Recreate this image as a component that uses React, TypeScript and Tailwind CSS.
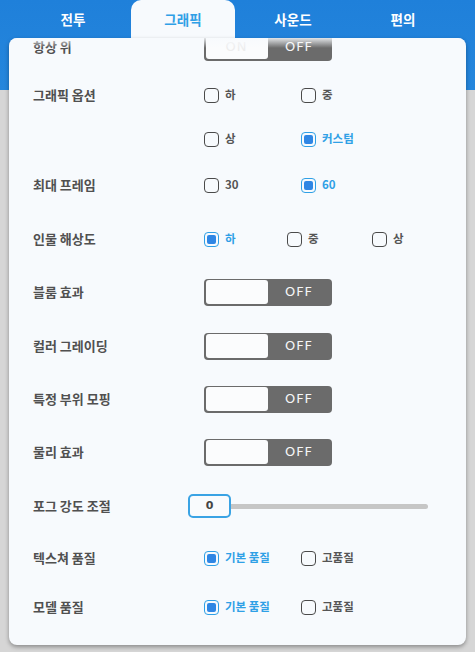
import React from 'react';

const font = "font-['Noto_Sans_CJK_KR','Noto_Sans',sans-serif]";

const tabs = ['전투', '그래픽', '사운드', '편의'];

const Check = ({ on }: { on?: boolean }) => (
  <span
    className={`flex h-[15px] w-[15px] items-center justify-center rounded-[4px] border-[1.5px] ${
      on ? 'border-[#2fa0e6]' : 'border-[#4a4a4a]'
    }`}
  >
    {on && <span className="h-[9px] w-[9px] rounded-[2px] bg-[#2f86e4]" />}
  </span>
);

const Option = ({ label, on, width }: { label: string; on?: boolean; width: string }) => (
  <div className={`flex items-center gap-[6px] ${width}`}>
    <Check on={on} />
    <span className={`text-[11.5px] font-bold ${on ? 'text-[#2fa0e6]' : 'text-[#555]'}`}>{label}</span>
  </div>
);

const Toggle = ({ faint }: { faint?: boolean }) => (
  <div className="flex h-[27px] w-[128px] rounded-[4px] bg-[#6b6b6b] p-[1.5px]">
    <div className="flex w-[62px] items-center justify-center rounded-[3px] bg-[#fbfcfd] font-['DejaVu_Sans',sans-serif] text-[13px] tracking-[1px] text-[#ededed]">
      {faint ? 'ON' : ''}
    </div>
    <div className="flex flex-1 items-center justify-center font-['DejaVu_Sans',sans-serif] text-[13px] tracking-[1px] text-[#f6f6f6]">
      OFF
    </div>
  </div>
);

const Row = ({ label, mt, children }: { label?: string; mt: string; children: React.ReactNode }) => (
  <div className={`flex h-[28px] items-center ${mt}`}>
    <div className="w-[171px] text-[13px] font-bold text-[#505050]">{label}</div>
    {children}
  </div>
);

export default function App() {
  return (
    <div
      className={`${font} h-[652px] w-[475px] overflow-hidden bg-[linear-gradient(to_bottom,#1f80da_0px,#2586dc_90px,#d6d6d6_90px,#d6d6d6_100%)]`}
    >
      <div className="flex h-[38px] pl-[18px]">
        {tabs.map((t, i) =>
          i === 1 ? (
            <div key={t} className="mx-[3px] flex w-[104px] items-center justify-center rounded-t-[10px] bg-[#f7fafd] text-[13.5px] font-bold text-[#2fa0e6]">
              {t}
            </div>
          ) : (
            <div key={t} className="flex w-[110px] items-center justify-center text-[13.5px] font-bold text-white">
              {t}
            </div>
          )
        )}
      </div>

      <div className="relative mx-[9px] h-[607px] overflow-hidden rounded-[8px] bg-[#f7fafd] pl-[24px] shadow-[0_2px_4px_rgba(0,0,0,0.35)]">
        <div className="pointer-events-none absolute inset-x-0 top-0 z-10 h-[10px] bg-[linear-gradient(to_bottom,rgba(247,250,253,0.85),rgba(247,250,253,0))]" />
        <Row label="항상 위" mt="-mt-[5px]">
          <Toggle faint />
        </Row>
        <Row label="그래픽 옵션" mt="mt-[20px]">
          <Option label="하" width="w-[97px]" />
          <Option label="중" width="w-[97px]" />
        </Row>
        <Row mt="mt-[16px]">
          <Option label="상" width="w-[97px]" />
          <Option label="커스텀" on width="w-[97px]" />
        </Row>
        <Row label="최대 프레임" mt="mt-[18px]">
          <Option label="30" width="w-[97px]" />
          <Option label="60" on width="w-[97px]" />
        </Row>
        <Row label="인물 해상도" mt="mt-[26px]">
          <Option label="하" on width="w-[83px]" />
          <Option label="중" width="w-[85px]" />
          <Option label="상" width="w-[60px]" />
        </Row>
        <Row label="블룸 효과" mt="mt-[25px]">
          <Toggle />
        </Row>
        <Row label="컬러 그레이딩" mt="mt-[26px]">
          <Toggle />
        </Row>
        <Row label="특정 부위 모핑" mt="mt-[25px]">
          <Toggle />
        </Row>
        <Row label="물리 효과" mt="mt-[25px]">
          <Toggle />
        </Row>
        <div className="mt-[26px] flex h-[28px] items-center">
          <div className="w-[155px] text-[13px] font-bold text-[#505050]">포그 강도 조절</div>
          <div className="flex items-center">
            <div className="flex h-[24px] w-[43px] items-center justify-center rounded-[5px] border-2 border-[#3aa3e4] bg-[#f9fbfd] font-['DejaVu_Sans',sans-serif] text-[11px] font-bold text-[#444]">
              0
            </div>
            <div className="h-[5px] w-[197px] rounded-r-full bg-[#c6c6c6]" />
          </div>
        </div>
        <Row label="텍스쳐 품질" mt="mt-[24px]">
          <Option label="기본 품질" on width="w-[97px]" />
          <Option label="고품질" width="w-[97px]" />
        </Row>
        <Row label="모델 품질" mt="mt-[21px]">
          <Option label="기본 품질" on width="w-[97px]" />
          <Option label="고품질" width="w-[97px]" />
        </Row>
      </div>
    </div>
  );
}
